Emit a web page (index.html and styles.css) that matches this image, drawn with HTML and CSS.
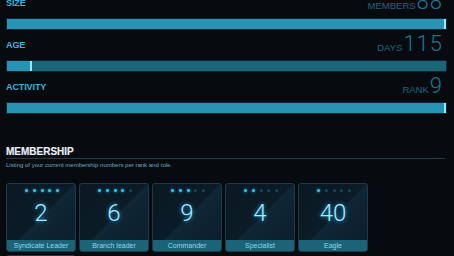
FILE: index.html
```html
<!DOCTYPE html>
<html lang="en">
<head>
  <meta charset="UTF-8" />
  <title>Syndicate Overview</title>
  <link rel="stylesheet" href="styles.css">
</head>
<body>
  <main class="panel">
    <section class="stats">
      <div class="stat">
        <div class="stat-head">
          <span class="stat-label">Size</span>
          <span class="stat-value"><small>Members</small>88</span>
        </div>
        <div class="bar"><div class="bar-fill" style="width:100%"></div></div>
      </div>
      <div class="stat">
        <div class="stat-head">
          <span class="stat-label">Age</span>
          <span class="stat-value"><small>Days</small>115</span>
        </div>
        <div class="bar"><div class="bar-fill" style="width:5.6%"></div></div>
      </div>
      <div class="stat">
        <div class="stat-head">
          <span class="stat-label">Activity</span>
          <span class="stat-value"><small>Rank</small>9</span>
        </div>
        <div class="bar"><div class="bar-fill" style="width:100%"></div></div>
      </div>
    </section>

    <section class="membership">
      <h2>Membership</h2>
      <p class="desc">Listing of your current membership numbers per rank and role.</p>
      <div class="cards">
        <div class="card">
          <div class="stars"><i class="on"></i><i class="on"></i><i class="on"></i><i class="on"></i><i class="on"></i></div>
          <div class="count">2</div>
          <div class="role">Syndicate Leader</div>
        </div>
        <div class="card">
          <div class="stars"><i class="on"></i><i class="on"></i><i class="on"></i><i class="on"></i><i></i></div>
          <div class="count">6</div>
          <div class="role">Branch leader</div>
        </div>
        <div class="card">
          <div class="stars"><i class="on"></i><i class="on"></i><i class="on"></i><i></i><i></i></div>
          <div class="count">9</div>
          <div class="role">Commander</div>
        </div>
        <div class="card">
          <div class="stars"><i class="on"></i><i class="on"></i><i></i><i></i><i></i></div>
          <div class="count">4</div>
          <div class="role">Specialist</div>
        </div>
        <div class="card">
          <div class="stars"><i class="on"></i><i></i><i></i><i></i><i></i></div>
          <div class="count">40</div>
          <div class="role">Eagle</div>
        </div>
        <div class="card">
          <div class="stars"><i></i><i></i><i></i><i></i><i></i></div>
          <div class="count">27</div>
          <div class="role">Recruit</div>
        </div>
      </div>
    </section>
  </main>
</body>
</html>
```

FILE: styles.css
```css
/* Base */
body { margin:0; background:#070b0f; color:#3fb0d8; font-family:"Liberation Sans", Arial, sans-serif; overflow:hidden; }
.panel { margin-top:-6px; padding:0 7px 0 6px; }
/* Stats */
.stat { margin-bottom:6px; }
.stat-head { display:flex; justify-content:space-between; align-items:flex-end; height:24px; padding-right:4px; }
.stat-label { align-self:flex-start; margin-top:4px; font-size:9px; line-height:10px; font-weight:bold; text-transform:uppercase; letter-spacing:-0.1px; color:#3fb0d8; }
.stat-value { display:flex; align-items:baseline; gap:1px; margin-bottom:1px; font-family:Roboto, sans-serif; font-weight:300; font-size:22px; line-height:22px; letter-spacing:1px; color:#1d7590; }
.stat-value small { font-family:"Liberation Sans", Arial, sans-serif; font-weight:normal; font-size:9.5px; letter-spacing:0; text-transform:uppercase; color:#19647b; }
.bar { height:10px; border:1px solid #0c2733; background:#1a6577; }
.bar-fill { height:100%; box-sizing:border-box; background:#2893b2; border-right:2px solid #9ce8f6; }
/* Membership */
.membership { margin-top:33px; }
.membership h2 { margin:0 2px 0 0; padding-bottom:1px; font-size:10px; line-height:10px; font-weight:bold; text-transform:uppercase; color:#e6f2f6; border-bottom:1px solid #223d4a; text-shadow:0.5px 0 0 rgba(255,80,80,0.35), -0.5px 0 0 rgba(80,200,255,0.35); }
.desc { margin:2px 0 0; font-size:6px; line-height:8px; color:#6fa8c0; }
.cards { display:flex; flex-wrap:wrap; gap:3px; width:366px; margin-top:14px; }
.card { width:70px; height:69px; box-sizing:border-box; display:flex; flex-direction:column; border:1px solid #1d3a49; border-radius:3px; overflow:hidden; background:linear-gradient(135deg, #0a1822 0%, #0b1c27 49%, #0f2636 51%, #0b1d29 100%); }
.stars { display:flex; justify-content:center; gap:4.7px; height:3px; margin-top:5px; padding-left:2px; }
.stars i { width:3px; height:3px; border-radius:50%; background:#0f4b62; }
.stars i.on { background:#2fc6f2; box-shadow:0 0 3px #1aa8e0; }
.count { margin-top:9px; text-align:center; font-family:Roboto, sans-serif; font-weight:300; font-size:24px; line-height:25px; color:#a8eaff; text-shadow:0 0 4px #1fa6ee; }
.role { margin-top:auto; height:11px; line-height:11px; text-align:center; font-size:7px; color:#8dd6f0; background:#1b6478; }
```
